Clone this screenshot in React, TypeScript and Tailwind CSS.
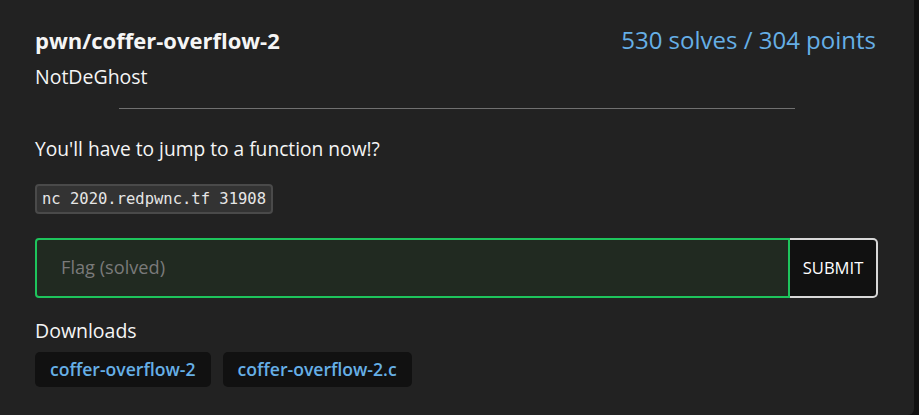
import React from 'react';

const font = { fontFamily: '"Open Sans", "Noto Sans", sans-serif' };

const downloads = ['coffer-overflow-2', 'coffer-overflow-2.c'];

export default function App() {
  return (
    <div className="w-[919px] h-[415px] bg-[#111] overflow-hidden" style={font}>
      <div className="w-[914px] h-[415px] bg-[#222] rounded-br-[6px] px-[35px] pt-[26px] text-[#f5f5f5]">
        <div className="flex justify-between items-start">
          <div>
            <h1 className="text-[22px] font-bold leading-[28px]">pwn/coffer-overflow-2</h1>
            <p className="text-[19.5px] leading-[26px] mt-[10px]">NotDeGhost</p>
          </div>
          <p className="text-[24px] leading-[28px] text-[#66afe6] mr-[3px]">530 solves / 304 points</p>
        </div>

        <hr className="mx-[84px] mt-[18px] border-0 border-t border-[#707070]" />

        <p className="text-[19.2px] leading-[26px] mt-[27px]">You'll have to jump to a function now!?</p>

        <div className="mt-[22px]">
          <code
            className="inline-block bg-[#333] border-2 border-[#4a4a4a] rounded-[4px] px-[5px] py-[2px] text-[15.5px] leading-[22px] text-[#e6e6e6]"
            style={{ fontFamily: '"DejaVu Sans Mono", monospace' }}
          >
            nc 2020.redpwnc.tf 31908
          </code>
        </div>

        <div className="flex mt-[24px] mr-[1px] h-[60px]">
          <input
            className="flex-1 bg-[#212a21] border-2 border-[#1ec45c] rounded-l-[4px] px-[24px] text-[18.2px] text-white placeholder-[#7a7a7a] outline-none"
            placeholder="Flag (solved)"
            style={font}
          />
          <button className="w-[88px] bg-[#111] border-2 border-l-0 border-[#d8d8d8] rounded-r-[5px] text-[16.6px] text-white">
            SUBMIT
          </button>
        </div>

        <p className="text-[19.5px] leading-[26px] mt-[20px]">Downloads</p>
        <div className="flex gap-[12px] mt-[8px]">
          {downloads.map((d) => (
            <a
              key={d}
              className="bg-[#111] rounded-[5px] px-[15px] h-[35px] flex items-center text-[17.6px] font-semibold text-[#66afe6]"
            >
              {d}
            </a>
          ))}
        </div>
      </div>
    </div>
  );
}
